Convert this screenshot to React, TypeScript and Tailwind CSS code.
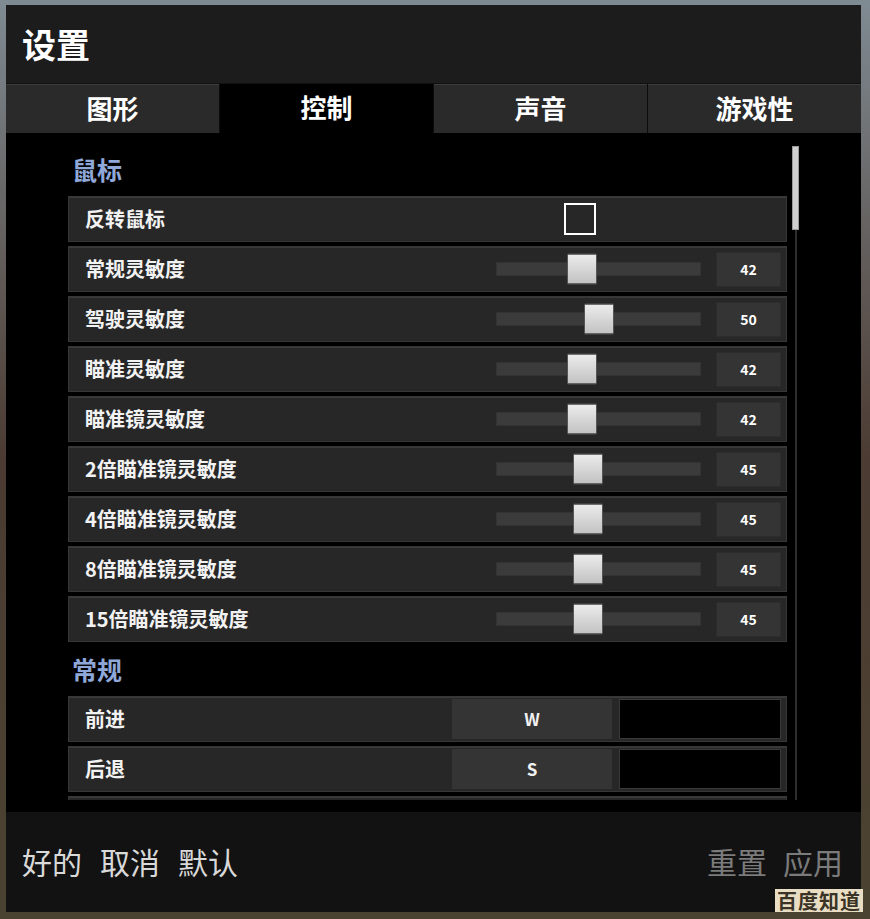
import React from "react";

const font = { fontFamily: '"Noto Sans CJK SC", "Noto Sans", sans-serif' };

type SliderRow = { label: string; value: number };

const mouseRows: SliderRow[] = [
  { label: "常规灵敏度", value: 42 },
  { label: "驾驶灵敏度", value: 50 },
  { label: "瞄准灵敏度", value: 42 },
  { label: "瞄准镜灵敏度", value: 42 },
  { label: "2倍瞄准镜灵敏度", value: 45 },
  { label: "4倍瞄准镜灵敏度", value: 45 },
  { label: "8倍瞄准镜灵敏度", value: 45 },
  { label: "15倍瞄准镜灵敏度", value: 45 },
];

const keyRows = [
  { label: "前进", key: "W" },
  { label: "后退", key: "S" },
];

function Row({ children }: { children: React.ReactNode }) {
  return (
    <div className="h-[46px] mb-[4px] flex items-center pl-[16px] pr-[5px] bg-[#272727] border border-[#363636] shadow-[inset_0_1px_0_#3a3a3a]">
      {children}
    </div>
  );
}

function Label({ text }: { text: string }) {
  return <span className="flex-1 text-[20px] font-bold text-[#f2f2f2] leading-none">{text}</span>;
}

function Slider({ value }: { value: number }) {
  return (
    <div className="flex items-center">
      <div className="relative w-[205px] h-[14px] bg-[#3b3b3b] border border-[#333]">
        {/* thumb */}
        <div
          className="absolute top-1/2 w-[30px] h-[31px] -translate-x-1/2 -translate-y-1/2 bg-linear-to-b from-[#ececec] to-[#c2c2c2] border border-[#555] rounded-[1px]"
          style={{ left: `${value}%` }}
        />
      </div>
      <div className="ml-[15px] w-[65px] h-[35px] flex items-center justify-center bg-[#343434] border border-[#2c2c2c] text-[14px] font-bold text-white">
        {value}
      </div>
    </div>
  );
}

function Section({ title }: { title: string }) {
  return (
    <div className="h-[50px] flex items-center pl-[4px] pb-[3px]">
      <span className="text-[25px] font-bold text-[#8fa8d8] leading-none">{title}</span>
    </div>
  );
}

export default function App() {
  return (
    <div
      className="relative w-[870px] h-[919px] overflow-hidden bg-linear-to-b from-[#7f8b93] via-[#4b3b32] to-[#4b4331] pt-[5px] pl-[6px]"
      style={font}
    >
      <div className="w-[855px] h-[907px] flex flex-col bg-black">
        {/* header */}
        <div className="h-[79px] flex items-center pl-[16px] bg-[#1c1c1c] border-b border-[#101010]">
          <span className="text-[34px] font-bold text-white leading-none">设置</span>
        </div>

        {/* tabs */}
        <div className="h-[49px] grid grid-cols-4 gap-px bg-[#0c0c0c]">
          {["图形", "控制", "声音", "游戏性"].map((t) => (
            <div
              key={t}
              className={
                t === "控制"
                  ? "flex items-center justify-center pb-[4px] bg-black text-[26px] font-bold text-white"
                  : "flex items-center justify-center pb-[4px] bg-[#2a2a2a] border-t border-[#3c3c3c] text-[26px] font-bold text-white"
              }
            >
              {t}
            </div>
          ))}
        </div>

        {/* content */}
        <div className="h-[679px] flex bg-black pb-[12px]">
          <div className="w-[781px] pl-[62px] pt-[13px] overflow-hidden">
            <Section title="鼠标" />
            <Row>
              <Label text="反转鼠标" />
              <div className="w-[32px] h-[32px] border-2 border-white mr-[185px]" />
            </Row>
            {mouseRows.map((r) => (
              <Row key={r.label}>
                <Label text={r.label} />
                <Slider value={r.value} />
              </Row>
            ))}
            <Section title="常规" />
            {keyRows.map((r) => (
              <Row key={r.label}>
                <Label text={r.label} />
                <div className="w-[160px] h-[40px] flex items-center justify-center bg-[#343434] text-[17px] font-bold text-[#f0f0f0]">
                  {r.key}
                </div>
                <div className="ml-[7px] w-[162px] h-[40px] bg-black border border-[#3a3a3a]" />
              </Row>
            ))}
            <Row>
              <Label text="" />
            </Row>
          </div>
          {/* scrollbar */}
          <div className="ml-[5px] w-[7px] pt-[13px] flex flex-col items-center">
            <div className="w-[7px] h-[84px] bg-[#cfcfcf] border border-[#9a9a9a]" />
            <div className="w-[2px] flex-1 bg-[#2e2e2e]" />
          </div>
        </div>

        {/* footer */}
        <div className="h-[100px] flex items-center justify-between px-[16px] pb-[2px] bg-[#121212]">
          <div className="flex gap-[18px] text-[30px] text-[#d9d9d9] leading-none">
            <span>好的</span>
            <span>取消</span>
            <span>默认</span>
          </div>
          <div className="flex gap-[16px] pr-[2px] text-[30px] text-[#7b7b7b] leading-none">
            <span>重置</span>
            <span>应用</span>
          </div>
        </div>
      </div>

      {/* watermark */}
      <div className="absolute right-[7px] bottom-[7px] px-[2px] bg-[#e9dec4] text-[20px] font-bold text-[#3a3326] leading-[23px] tracking-[1px]">
        百度知道
      </div>
    </div>
  );
}
